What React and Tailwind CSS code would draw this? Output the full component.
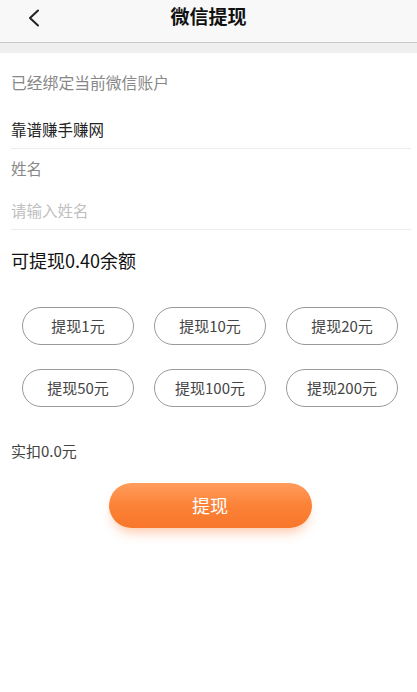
import React, { useState } from 'react';

const amounts = [1, 10, 20, 50, 100, 200];

const App = () => {
  const [name, setName] = useState('');

  return (
    <div className="min-h-screen w-[417px] bg-white font-['Noto_Sans_CJK_SC','Noto_Sans',sans-serif]">
      {/* Top bar */}
      <header className="relative h-[43px] bg-[#f8f8f8] border-b border-[#c9c9c9] flex items-center justify-center">
        <button className="absolute left-[22px] top-[6px] w-[24px] h-[24px] flex items-center justify-center">
          <svg width="14" height="18" viewBox="0 0 14 18" fill="none">
            <path d="M11 1.5L3 9l8 7.5" stroke="#222" strokeWidth="2" strokeLinecap="round" strokeLinejoin="round" />
          </svg>
        </button>
        <h1 className="text-[19px] font-bold text-[#111] -mt-[9px]">微信提现</h1>
      </header>
      <div className="h-[10px] bg-[#efefef]" />

      <div className="pl-[11px] pr-[6px]">
        <p className="mt-[19px] text-[15.8px] leading-[22px] text-[#888]">已经绑定当前微信账户</p>
        <p className="mt-[24px] text-[15.5px] leading-[22px] text-[#222]">靠谱赚手赚网</p>
        <div className="mt-[8px] border-b border-[#ececec]" />
        <p className="mt-[8px] text-[15.5px] leading-[22px] text-[#888]">姓名</p>
        <input
          value={name}
          onChange={(e) => setName(e.target.value)}
          placeholder="请输入姓名"
          className="mt-[20px] w-full text-[15.5px] leading-[22px] outline-none placeholder:text-[#c0c0c0] text-[#222]"
        />
        <div className="mt-[7px] border-b border-[#ececec]" />
        <p className="mt-[18px] text-[18px] leading-[25px] text-[#111]">可提现0.40余额</p>
      </div>

      <div className="mt-[34px] pl-[22px] pr-[19px] grid grid-cols-3 gap-x-[20px] gap-y-[24px]">
        {amounts.map((a) => (
          <button
            key={a}
            className="h-[38px] rounded-full border border-[#999] text-[15px] text-[#444] flex items-center justify-center"
          >
            提现{a}元
          </button>
        ))}
      </div>

      <p className="mt-[33px] px-[11px] text-[15px] leading-[21px] text-[#444]">实扣0.0元</p>

      <div className="mt-[22px] flex justify-center pl-[3px]">
        <button className="w-[203px] h-[45px] rounded-full bg-gradient-to-b from-[#ff9d5c] via-[#fc8237] to-[#f8772a] text-white text-[18px] shadow-[0_8px_12px_-4px_rgba(250,130,60,0.45)]">
          提现
        </button>
      </div>
    </div>
  );
};

export default App;
